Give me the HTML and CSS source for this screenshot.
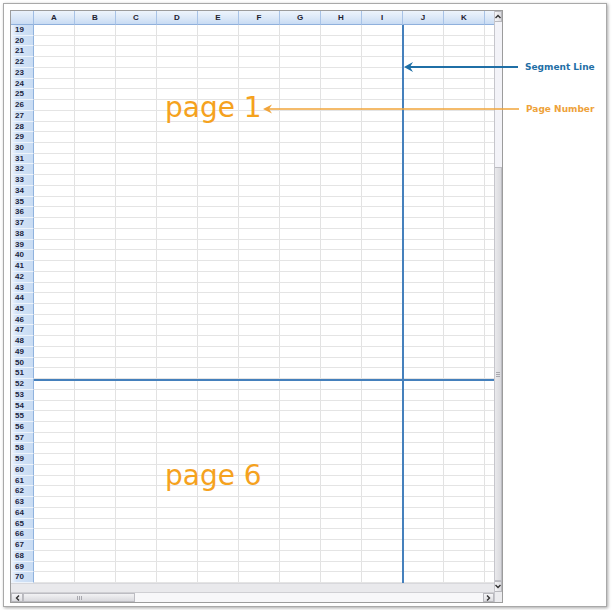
FILE: index.html
```html
<!DOCTYPE html>
<html>
<head>
<meta charset="utf-8">
<link rel="stylesheet" href="styles.css">
</head>
<body>
<div class="frame">
  <div class="sheet">
    <div class="colheads">
      <div class="corner"></div>
      <div class="ch">A</div><div class="ch">B</div><div class="ch">C</div><div class="ch">D</div>
      <div class="ch">E</div><div class="ch">F</div><div class="ch">G</div><div class="ch">H</div>
      <div class="ch">I</div><div class="ch">J</div><div class="ch">K</div>
      <div class="ch part"></div>
    </div>
    <div class="rows">
      <div class="row"><div class="rh">19</div><div class="cells"></div></div>
      <div class="row"><div class="rh">20</div><div class="cells"></div></div>
      <div class="row"><div class="rh">21</div><div class="cells"></div></div>
      <div class="row"><div class="rh">22</div><div class="cells"></div></div>
      <div class="row"><div class="rh">23</div><div class="cells"></div></div>
      <div class="row"><div class="rh">24</div><div class="cells"></div></div>
      <div class="row"><div class="rh">25</div><div class="cells"></div></div>
      <div class="row"><div class="rh">26</div><div class="cells"></div></div>
      <div class="row"><div class="rh">27</div><div class="cells"></div></div>
      <div class="row"><div class="rh">28</div><div class="cells"></div></div>
      <div class="row"><div class="rh">29</div><div class="cells"></div></div>
      <div class="row"><div class="rh">30</div><div class="cells"></div></div>
      <div class="row"><div class="rh">31</div><div class="cells"></div></div>
      <div class="row"><div class="rh">32</div><div class="cells"></div></div>
      <div class="row"><div class="rh">33</div><div class="cells"></div></div>
      <div class="row"><div class="rh">34</div><div class="cells"></div></div>
      <div class="row"><div class="rh">35</div><div class="cells"></div></div>
      <div class="row"><div class="rh">36</div><div class="cells"></div></div>
      <div class="row"><div class="rh">37</div><div class="cells"></div></div>
      <div class="row"><div class="rh">38</div><div class="cells"></div></div>
      <div class="row"><div class="rh">39</div><div class="cells"></div></div>
      <div class="row"><div class="rh">40</div><div class="cells"></div></div>
      <div class="row"><div class="rh">41</div><div class="cells"></div></div>
      <div class="row"><div class="rh">42</div><div class="cells"></div></div>
      <div class="row"><div class="rh">43</div><div class="cells"></div></div>
      <div class="row"><div class="rh">44</div><div class="cells"></div></div>
      <div class="row"><div class="rh">45</div><div class="cells"></div></div>
      <div class="row"><div class="rh">46</div><div class="cells"></div></div>
      <div class="row"><div class="rh">47</div><div class="cells"></div></div>
      <div class="row"><div class="rh">48</div><div class="cells"></div></div>
      <div class="row"><div class="rh">49</div><div class="cells"></div></div>
      <div class="row"><div class="rh">50</div><div class="cells"></div></div>
      <div class="row"><div class="rh">51</div><div class="cells"></div></div>
      <div class="row"><div class="rh">52</div><div class="cells"></div></div>
      <div class="row"><div class="rh">53</div><div class="cells"></div></div>
      <div class="row"><div class="rh">54</div><div class="cells"></div></div>
      <div class="row"><div class="rh">55</div><div class="cells"></div></div>
      <div class="row"><div class="rh">56</div><div class="cells"></div></div>
      <div class="row"><div class="rh">57</div><div class="cells"></div></div>
      <div class="row"><div class="rh">58</div><div class="cells"></div></div>
      <div class="row"><div class="rh">59</div><div class="cells"></div></div>
      <div class="row"><div class="rh">60</div><div class="cells"></div></div>
      <div class="row"><div class="rh">61</div><div class="cells"></div></div>
      <div class="row"><div class="rh">62</div><div class="cells"></div></div>
      <div class="row"><div class="rh">63</div><div class="cells"></div></div>
      <div class="row"><div class="rh">64</div><div class="cells"></div></div>
      <div class="row"><div class="rh">65</div><div class="cells"></div></div>
      <div class="row"><div class="rh">66</div><div class="cells"></div></div>
      <div class="row"><div class="rh">67</div><div class="cells"></div></div>
      <div class="row"><div class="rh">68</div><div class="cells"></div></div>
      <div class="row"><div class="rh">69</div><div class="cells"></div></div>
      <div class="row"><div class="rh">70</div><div class="cells"></div></div>
      <div class="seg-v"></div>
      <div class="seg-h"></div>
      <div class="pagelabel p1">page 1</div>
      <div class="pagelabel p6">page 6</div>
    </div>
    <div class="band"></div>
    <div class="hscroll">
      <div class="hbtn"><svg width="5" height="6" viewBox="0 0 5 6"><path d="M4 0.5 L1.5 3 L4 5.5" fill="none" stroke="#333" stroke-width="1.4"/></svg></div>
      <div class="hthumb"><span class="grip-h"></span></div>
      <div class="htrack"></div>
      <div class="hbtn right"><svg width="5" height="6" viewBox="0 0 5 6"><path d="M1 0.5 L3.5 3 L1 5.5" fill="none" stroke="#333" stroke-width="1.4"/></svg></div>
    </div>
    <div class="vscroll">
      <div class="vbtn"><svg width="6" height="5" viewBox="0 0 6 5"><path d="M0.5 4 L3 1.5 L5.5 4" fill="none" stroke="#333" stroke-width="1.4"/></svg></div>
      <div class="vtrack"></div>
      <div class="vthumb"><span class="grip-v"></span></div>
      <div class="vbtn"><svg width="6" height="5" viewBox="0 0 6 5"><path d="M0.5 1 L3 3.5 L5.5 1" fill="none" stroke="#333" stroke-width="1.4"/></svg></div>
    </div>
    <div class="sc-corner"></div>
  </div>

  <svg class="notes" width="612" height="614" viewBox="0 0 612 614">
    <line x1="408" y1="67" x2="518" y2="67" stroke="#1f6fa6" stroke-width="2"/>
    <polygon points="404,67 413,62 410,67 413,72" fill="#1f6fa6"/>
    <line x1="268" y1="109" x2="519" y2="109" stroke="#f1a43a" stroke-width="1.6"/>
    <polygon points="263,109 272,104.5 269,109 272,113.5" fill="#f1a43a"/>
  </svg>
  <div class="note seg">Segment Line</div>
  <div class="note pg">Page Number</div>
</div>
</body>
</html>
```

FILE: styles.css
```css
html, body {
  margin: 0;
  padding: 0;
  background: #ffffff;
}

.frame {
  position: relative;
  box-sizing: border-box;
  margin: 3px;
  width: 604px;
  height: 604px;
  padding: 6px;
  border: 1px solid #a9a9a9;
  box-shadow: 1px 1px 3px rgba(0, 0, 0, 0.35);
  background: #ffffff;
}

.sheet {
  box-sizing: border-box;
  width: 493px;
  height: 593px;
  border: 1px solid #9c9c9c;
  display: grid;
  grid-template-columns: 483px 8px;
  grid-template-rows: 14px 558px 9px 10px;
  background: #ffffff;
}

/* column headers */
.colheads {
  grid-column: 1;
  grid-row: 1;
  display: flex;
}
.corner {
  box-sizing: border-box;
  width: 23px;
  height: 14px;
  background: linear-gradient(#e9f1fb, #cadcf3);
  border-right: 1px solid #9fbde4;
  border-bottom: 1px solid #8fb0dc;
}
.ch {
  box-sizing: border-box;
  width: 41px;
  height: 14px;
  background: linear-gradient(#edf4fc, #dbe8f8 55%, #c8dbf3);
  border-right: 1px solid #a8c3e7;
  border-bottom: 1px solid #8fb0dc;
  font-family: "Liberation Sans", Arial, sans-serif;
  font-weight: bold;
  font-size: 8px;
  line-height: 13px;
  text-align: center;
  color: #1e2230;
}
.ch.part {
  flex: 1;
  width: auto;
  border-right: none;
}

/* rows */
.rows {
  grid-column: 1;
  grid-row: 2;
  position: relative;
  display: grid;
  grid-template-rows: repeat(52, 1fr);
  overflow: hidden;
}
.row {
  display: grid;
  grid-template-columns: 23px 1fr;
  min-height: 0;
}
.rh {
  box-sizing: border-box;
  background: linear-gradient(to right, #f3f7fd, #d3e3f7 25%, #c9dcf3);
  border-right: 1px solid #8fb2de;
  border-bottom: 1px solid #eef4fb;
  font-family: "Liberation Sans", Arial, sans-serif;
  font-weight: bold;
  font-size: 8px;
  line-height: 10px;
  padding-left: 4px;
  color: #1b2540;
  overflow: hidden;
}
.cells {
  box-sizing: border-box;
  border-bottom: 1px solid #e4e4e4;
  background: repeating-linear-gradient(to right, #ffffff 0 40px, #e2e2e2 40px 41px);
}

.seg-v {
  position: absolute;
  left: 391px;
  top: 0;
  bottom: 0;
  width: 2px;
  background: #4580bc;
}
.seg-h {
  position: absolute;
  left: 23px;
  right: 0;
  top: 353.5px;
  height: 2px;
  background: #4580bc;
}

.pagelabel {
  position: absolute;
  left: 154px;
  font-family: "DejaVu Sans", Verdana, sans-serif;
  font-size: 28px;
  line-height: 28px;
  color: #f5a21e;
  white-space: nowrap;
}
.p1 { top: 69px; }
.p6 { top: 437px; }

.band {
  grid-column: 1;
  grid-row: 3;
  background: #e9e9ec;
  border-top: 1px solid #d8d8dc;
}

/* horizontal scrollbar */
.hscroll {
  grid-column: 1;
  grid-row: 4;
  display: flex;
  background: #f4f4f6;
  border-top: 1px solid #cfcfd3;
}
.hbtn {
  box-sizing: border-box;
  width: 12px;
  display: flex;
  align-items: center;
  justify-content: center;
  background: linear-gradient(#f6f6f8, #dcdce0);
  border: 1px solid #b9b9be;
}
.hbtn.right {
  width: 11px;
}
.hthumb {
  box-sizing: border-box;
  width: 112px;
  display: flex;
  align-items: center;
  justify-content: center;
  background: linear-gradient(#f2f2f4, #dadade);
  border: 1px solid #bcbcc2;
}
.grip-h {
  width: 5px;
  height: 4px;
  background: repeating-linear-gradient(to right, #a8a8ae 0 1px, transparent 1px 2px);
}
.htrack {
  flex: 1;
  background: #f7f7f9;
}

/* vertical scrollbar */
.vscroll {
  grid-column: 2;
  grid-row: 1 / 4;
  display: flex;
  flex-direction: column;
  box-sizing: border-box;
  border-left: 1px solid #c6c6cc;
  background: #f4f4f8;
}
.vbtn {
  box-sizing: border-box;
  height: 11px;
  display: flex;
  align-items: center;
  justify-content: center;
  background: linear-gradient(to right, #f6f6f8, #dcdce0);
  border: 1px solid #b9b9be;
  border-left: none;
}
.vtrack {
  height: 145px;
  background: #f3f3f8;
}
.vthumb {
  flex: 1;
  box-sizing: border-box;
  display: flex;
  align-items: center;
  justify-content: center;
  background: linear-gradient(to right, #e9e9ec, #d9d9dd);
  border: 1px solid #bdbdc3;
  border-left: none;
}
.grip-v {
  width: 4px;
  height: 5px;
  background: repeating-linear-gradient(#a8a8ae 0 1px, transparent 1px 2px);
}
.sc-corner {
  grid-column: 2;
  grid-row: 4;
  background: #ececef;
  border-left: 1px solid #c6c6cc;
}

/* annotations */
.notes {
  position: absolute;
  left: -4px;
  top: -4px;
  pointer-events: none;
}
.note {
  position: absolute;
  font-family: "DejaVu Sans", Verdana, sans-serif;
  font-weight: bold;
  font-size: 9px;
  line-height: 11px;
  white-space: nowrap;
}
.note.seg {
  left: 521px;
  top: 57.5px;
  color: #1f6fa6;
}
.note.pg {
  left: 522px;
  top: 99.5px;
  color: #eea23a;
}
```
